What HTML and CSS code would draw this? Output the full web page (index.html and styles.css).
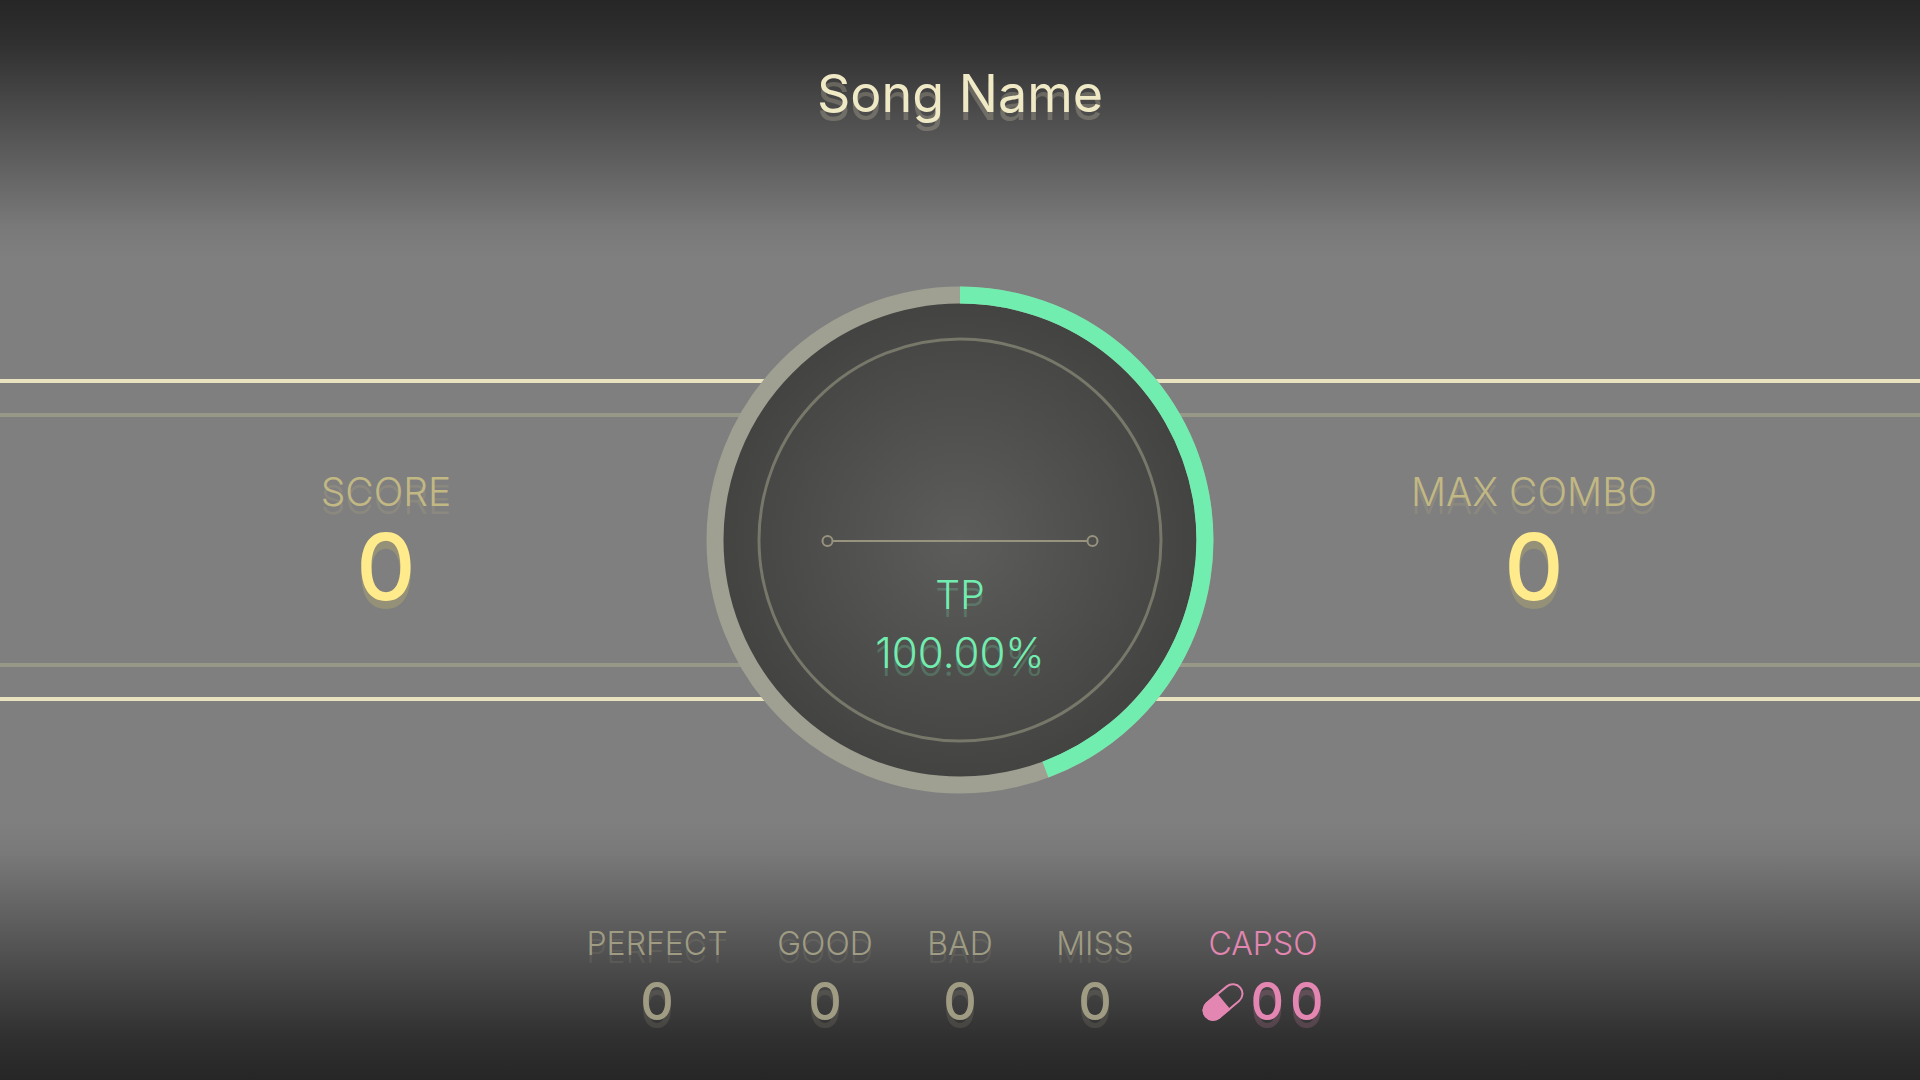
FILE: index.html
```
<!DOCTYPE html>
<html lang="en">
<head>
  <meta charset="UTF-8">
  <meta name="viewport" content="width=device-width, initial-scale=1.0">
  <title>Result</title>
  <link rel="stylesheet" href="styles.css">
</head>
<body>
  <header class="song">
    <h1>Song Name</h1>
  </header>

  <!-- Score band -->
  <main class="band">
    <div class="band-inner">
      <section class="panel panel-left">
        <h2>SCORE</h2>
        <p>0</p>
      </section>

      <section class="dial">
        <svg class="dial-art" viewBox="0 0 508 508" aria-hidden="true">
          <defs>
            <radialGradient id="dial-fill">
              <stop offset="0" stop-color="#5d5d5c"/>
              <stop offset="1" stop-color="#434341"/>
            </radialGradient>
          </defs>
          <circle cx="254" cy="254" r="238" fill="url(#dial-fill)"/>
          <circle cx="254" cy="254" r="245" fill="none" stroke="#9f9f92" stroke-width="17"/>
          <path d="M254 9 A245 245 0 0 1 339.4 483.6" fill="none" stroke="#72edb0" stroke-width="17"/>
          <circle cx="254" cy="254" r="201" fill="none" stroke="#77776a" stroke-width="3"/>
          <g fill="none" stroke="#98937e" stroke-width="2">
            <path d="M127 255 H381"/>
            <circle cx="121.5" cy="255" r="5"/>
            <circle cx="386.5" cy="255" r="5"/>
          </g>
        </svg>
        <div class="dial-text">
          <h2>TP</h2>
          <p>100.00%</p>
        </div>
      </section>

      <section class="panel panel-right">
        <h2>MAX COMBO</h2>
        <p>0</p>
      </section>
    </div>
  </main>

  <!-- Judgement counts -->
  <footer class="counts">
    <div class="count">
      <h3>PERFECT</h3>
      <p>0</p>
    </div>
    <div class="count">
      <h3>GOOD</h3>
      <p>0</p>
    </div>
    <div class="count">
      <h3>BAD</h3>
      <p>0</p>
    </div>
    <div class="count">
      <h3>MISS</h3>
      <p>0</p>
    </div>
    <div class="count capso">
      <h3>CAPSO</h3>
      <p>
        <svg class="pill" viewBox="0 0 42 38" aria-hidden="true">
          <g transform="translate(21 19) rotate(-40)">
            <rect x="-22.5" y="-9.5" width="45" height="19" rx="9.5" fill="none" stroke="currentColor" stroke-width="2"/>
            <path d="M1 -10.5 H-13 A10.5 10.5 0 0 0 -13 10.5 H1 Z" fill="currentColor"/>
          </g>
        </svg>
        <span>0</span>
        <span>0</span>
      </p>
    </div>
  </footer>
</body>
</html>
```
FILE: styles.css
```
* {
  box-sizing: border-box;
}
body {
  margin: 0;
  min-height: 100vh;
  display: grid;
  grid-template-rows: 1fr auto 1fr;
  font-family: Inter, sans-serif;
  background: linear-gradient(#262626, #303030 4%, #797979 21%, #7f7f7f 24%, #7f7f7f 76%, #797979 79%, #303030 96%, #262626);
}
h1, h2, h3, p {
  margin: 0;
  font-weight: 300;
}

/* Header */
.song {
  padding-top: 62px;
  text-align: center;
}
.song h1 {
  font-size: 52px;
  line-height: 64px;
  font-weight: 400;
  color: #f0e9c5;
  text-shadow: 0 8px 0 rgba(240, 233, 197, 0.22);
}

/* Score band */
.band {
  padding: 30px 0;
  border-top: 4px solid #e8e2be;
  border-bottom: 4px solid #e8e2be;
}
.band-inner {
  height: 254px;
  display: grid;
  grid-template-columns: 1fr 508px 1fr;
  align-items: center;
  border-top: 4px solid #989889;
  border-bottom: 4px solid #989889;
}
.panel {
  display: flex;
  flex-direction: column;
  align-items: center;
  gap: 5px;
}
.panel-left {
  padding-left: 66px;
}
.panel-right {
  padding-right: 66px;
}
.panel h2 {
  font-size: 39px;
  line-height: 48px;
  color: #c1b884;
  text-shadow: 0 8px 0 rgba(193, 184, 132, 0.2);
}
.panel p {
  font-size: 92px;
  line-height: 92px;
  font-weight: 500;
  color: #ffeb8c;
  text-shadow: 0 8px 0 rgba(180, 172, 110, 0.4);
}

/* Dial */
.dial {
  display: grid;
  margin: -131px 0;
}
.dial-art,
.dial-text {
  grid-area: 1 / 1;
}
.dial-art {
  width: 100%;
  display: block;
}
.dial-text {
  display: flex;
  flex-direction: column;
  align-items: center;
  gap: 10px;
  padding-top: 285px;
  line-height: 48px;
  color: #72edb0;
  text-shadow: 0 8px 0 rgba(114, 237, 176, 0.22);
}
.dial-text h2 {
  font-size: 39px;
}
.dial-text p {
  font-size: 42px;
}

/* Judgement counts */
.counts {
  display: grid;
  grid-template-columns: 185px 151px 119px 151px 185px;
  justify-content: center;
  align-content: end;
  padding-bottom: 50px;
}
.count {
  display: flex;
  flex-direction: column;
  align-items: center;
  gap: 10px;
  color: #9f9c83;
  text-shadow: 0 8px 0 rgba(159, 156, 131, 0.18);
}
.count h3 {
  font-size: 32px;
  line-height: 40px;
}
.count p {
  font-size: 52px;
  line-height: 56px;
  font-weight: 500;
}
.capso {
  color: #e386b2;
  text-shadow: 0 8px 0 rgba(227, 134, 178, 0.2);
}
.capso h3 {
  text-shadow: none;
}
.capso p {
  display: flex;
  align-items: center;
  gap: 6px;
}
.pill {
  width: 42px;
  height: 38px;
}
```
